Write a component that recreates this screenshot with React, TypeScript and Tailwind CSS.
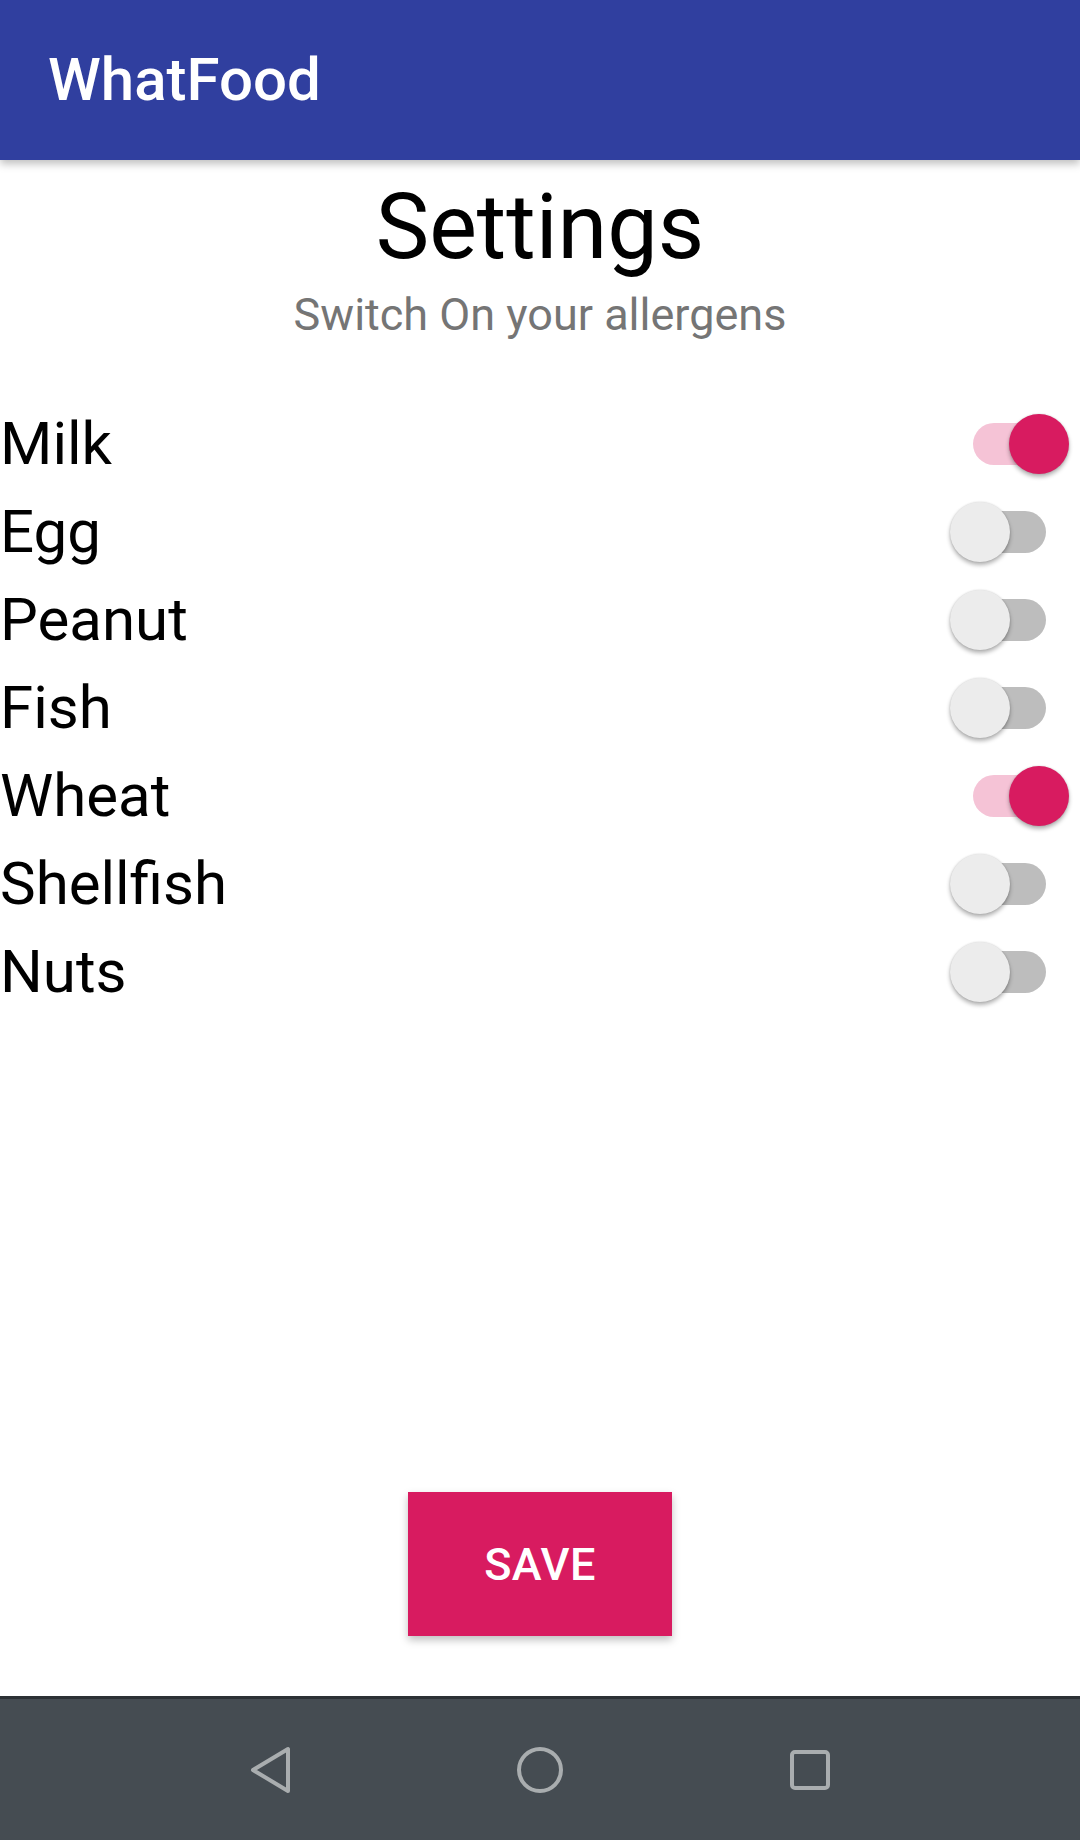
import React from "react";

const items: { name: string; on: boolean }[] = [
  { name: "Milk", on: true },
  { name: "Egg", on: false },
  { name: "Peanut", on: false },
  { name: "Fish", on: false },
  { name: "Wheat", on: true },
  { name: "Shellfish", on: false },
  { name: "Nuts", on: false },
];

function Switch({ on }: { on: boolean }) {
  return (
    <div className="relative w-[120px] h-[60px] shrink-0">
      <div
        className={
          "absolute left-[23px] top-[9px] w-[73px] h-[42px] rounded-full " +
          (on ? "bg-[#f5c3d6]" : "bg-[#bdbdbd]")
        }
      />
      <div
        className={
          "absolute top-0 w-[60px] h-[60px] rounded-full shadow-[0_3px_4px_rgba(0,0,0,0.3),0_0_2px_rgba(0,0,0,0.15)] " +
          (on ? "left-[59px] bg-[#d81b60]" : "left-0 bg-[#ececec]")
        }
      />
    </div>
  );
}

export default function App() {
  return (
    <div
      className="w-[1080px] h-[1840px] flex flex-col bg-white overflow-hidden"
      style={{ fontFamily: "Roboto, 'Noto Sans', sans-serif" }}
    >
      <header className="relative z-10 h-[160px] shrink-0 bg-[#303f9f] flex items-center pl-[48px] shadow-[0_4px_8px_rgba(0,0,0,0.25)]">
        <span className="text-white text-[60px] font-medium leading-[70px]">WhatFood</span>
      </header>

      <main className="flex-1 flex flex-col">
        <div className="mt-[15px] text-center text-black text-[90px] leading-[105px]">Settings</div>
        <div className="mt-[8px] text-center text-[#757575] text-[45px] leading-[53px]">
          Switch On your allergens
        </div>

        <div className="mt-[59px] flex flex-col">
          {items.map((it) => (
            <div key={it.name} className="h-[88px] flex items-center justify-between pr-[10px]">
              <span className="text-black text-[60px] leading-[70px]">{it.name}</span>
              <Switch on={it.on} />
            </div>
          ))}
        </div>

        <div className="mt-auto mb-[60px] flex justify-center">
          <button className="w-[264px] h-[144px] bg-[#d81b60] text-white text-[45px] leading-[53px] font-medium tracking-[0.5px] shadow-[0_4px_8px_rgba(0,0,0,0.25)]">
            SAVE
          </button>
        </div>
      </main>

      <nav className="h-[144px] shrink-0 bg-[#454c52] border-t-[3px] border-[#2c3135] flex justify-center items-center">
        <div className="w-[270px] flex justify-center">
          <svg width="48" height="52" viewBox="0 0 48 52" fill="none">
            <polygon
              points="7,26 42,5 42,47"
              stroke="#a9adaf"
              strokeWidth="4"
              strokeLinejoin="round"
            />
          </svg>
        </div>
        <div className="w-[270px] flex justify-center">
          <svg width="48" height="48" viewBox="0 0 48 48" fill="none">
            <circle cx="24" cy="24" r="21" stroke="#a9adaf" strokeWidth="4" />
          </svg>
        </div>
        <div className="w-[270px] flex justify-center">
          <svg width="44" height="44" viewBox="0 0 44 44" fill="none">
            <rect x="4" y="4" width="36" height="36" rx="3" stroke="#a9adaf" strokeWidth="4" />
          </svg>
        </div>
      </nav>
    </div>
  );
}
